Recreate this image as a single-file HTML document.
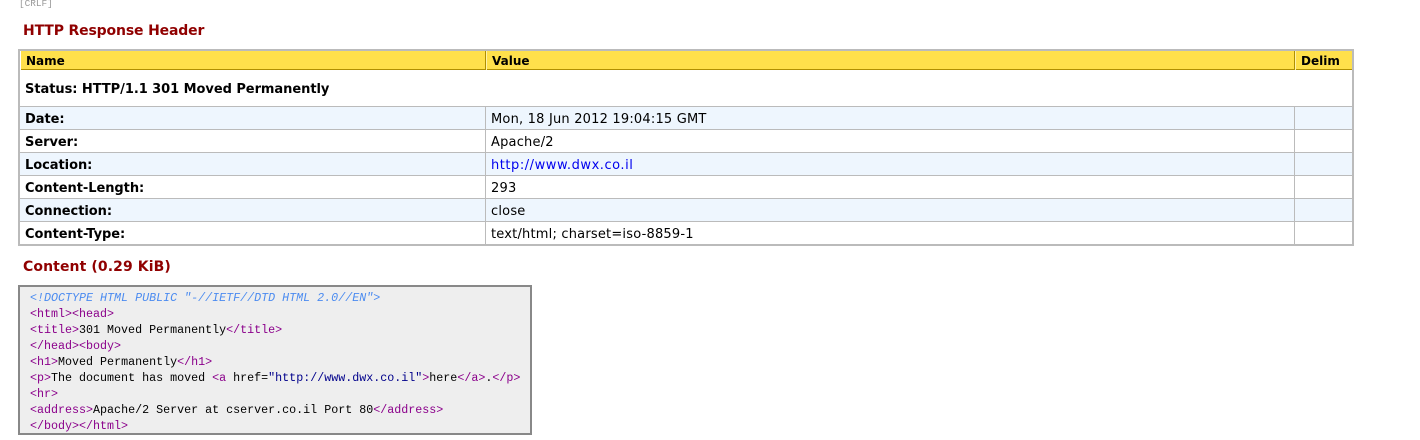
<!DOCTYPE html>
<html><head><meta charset="utf-8"><title>HTTP Response Header</title>
<style>
html,body{margin:0;padding:0;background:#fff}
body{position:relative;width:1420px;height:440px;overflow:hidden;font-family:"DejaVu Sans","Liberation Sans",sans-serif;color:#000}
.a{position:absolute;white-space:pre}
.t{font-size:13px;line-height:16px;letter-spacing:.2px}
.b{font-weight:bold;letter-spacing:-.05px}
.h{font-size:12px;line-height:16px;font-weight:bold}
h2{position:absolute;margin:0;left:23px;font-size:14px;line-height:18px;color:#900000;font-weight:bold;white-space:pre}
.r{position:absolute;left:20px;width:1332px;height:22px;border-bottom:1px solid #bbb}
.v{position:absolute;top:0;bottom:0;width:1px;background:#bbb}
pre{position:absolute;margin:0;left:30px;top:290px;font:11.68px/16px "Liberation Mono",monospace;color:#000}
i{color:#4b8bf0}.p{color:#8b008b}.n{color:#00008b}
</style></head><body>
<div class="a" style="left:19px;top:0;font:9.4px/8px 'Liberation Mono',monospace;color:#999">[CRLF]</div>
<h2 style="top:22px;letter-spacing:-.15px">HTTP Response Header</h2>

<div class="a" style="left:18px;top:49px;width:1332px;height:193px;border:2px solid #bbb"></div>
<div class="a" style="left:21px;top:51px;width:1331px;height:18px;background:#ffe04b;border-bottom:1px solid #b08f00"></div>
<div class="a" style="left:485px;top:51px;width:1px;height:19px;background:#b08f00"></div>
<div class="a" style="left:486px;top:51px;width:1px;height:19px;background:#fff2a8"></div>
<div class="a" style="left:1294px;top:51px;width:1px;height:19px;background:#b08f00"></div>
<div class="a" style="left:1295px;top:51px;width:1px;height:19px;background:#fff2a8"></div>
<div class="a h" style="left:26px;top:53px">Name</div>
<div class="a h" style="left:492px;top:53px">Value</div>
<div class="a h" style="left:1301px;top:53px">Delim</div>

<div class="a t b" style="left:25px;top:82px">Status: HTTP/1.1 301 Moved Permanently</div>
<div class="a" style="left:20px;top:106px;width:1332px;height:1px;background:#bbb"></div>

<div class="r" style="top:107px;background:#eef6fe"></div>
<div class="r" style="top:130px;background:#fff"></div>
<div class="r" style="top:153px;background:#eef6fe"></div>
<div class="r" style="top:176px;background:#fff"></div>
<div class="r" style="top:199px;background:#eef6fe"></div>
<div class="r" style="top:222px;background:#fff;border-bottom:0;height:22px"></div>
<div class="v" style="left:485px;top:107px;height:137px"></div>
<div class="v" style="left:1294px;top:107px;height:137px"></div>

<div class="a t b" style="left:25px;top:112px">Date:</div>
<div class="a t" style="left:491px;top:112px">Mon, 18 Jun 2012 19:04:15 GMT</div>
<div class="a t b" style="left:25px;top:135px">Server:</div>
<div class="a t" style="left:491px;top:135px">Apache/2</div>
<div class="a t b" style="left:25px;top:158px">Location:</div>
<div class="a t" style="left:491px;top:158px;color:#0000ee;letter-spacing:.54px">http://www.dwx.co.il</div>
<div class="a t b" style="left:25px;top:181px">Content-Length:</div>
<div class="a t" style="left:491px;top:181px">293</div>
<div class="a t b" style="left:25px;top:204px">Connection:</div>
<div class="a t" style="left:491px;top:204px">close</div>
<div class="a t b" style="left:25px;top:227px">Content-Type:</div>
<div class="a t" style="left:491px;top:227px">text/html; charset=iso-8859-1</div>

<h2 style="top:258px;letter-spacing:.1px">Content (0.29 KiB)</h2>
<div class="a" style="left:18px;top:285px;width:510px;height:146px;border:2px solid #888;background:#eee"></div>
<pre><i>&lt;!DOCTYPE HTML PUBLIC "-//IETF//DTD HTML 2.0//EN"&gt;</i>
<span class="p">&lt;html&gt;&lt;head&gt;</span>
<span class="p">&lt;title&gt;</span>301 Moved Permanently<span class="p">&lt;/title&gt;</span>
<span class="p">&lt;/head&gt;&lt;body&gt;</span>
<span class="p">&lt;h1&gt;</span>Moved Permanently<span class="p">&lt;/h1&gt;</span>
<span class="p">&lt;p&gt;</span>The document has moved <span class="p">&lt;a</span> href=<span class="n">"http://www.dwx.co.il"</span><span class="p">&gt;</span>here<span class="p">&lt;/a&gt;</span>.<span class="p">&lt;/p&gt;</span>
<span class="p">&lt;hr&gt;</span>
<span class="p">&lt;address&gt;</span>Apache/2 Server at cserver.co.il Port 80<span class="p">&lt;/address&gt;</span>
<span class="p">&lt;/body&gt;&lt;/html&gt;</span></pre>
</body></html>
